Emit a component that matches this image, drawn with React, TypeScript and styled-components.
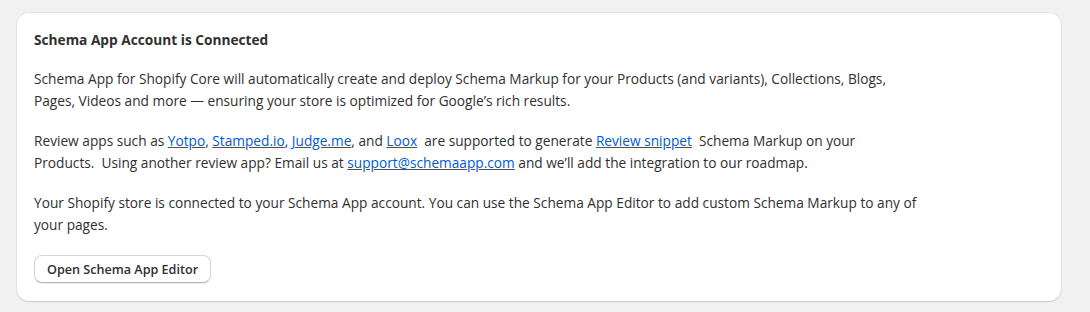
import React from 'react';
import styled, { createGlobalStyle } from 'styled-components';

const GlobalStyle = createGlobalStyle`
  body {
    margin: 0;
    background: #f1f1f1;
    font-family: 'Open Sans', 'Noto Sans', sans-serif;
    color: #303030;
  }
`;

const links = {
  yotpo: 'Yotpo',
  stamped: 'Stamped.io',
  judge: 'Judge.me',
  loox: 'Loox',
};

const App = () => {
  return (
    <>
      <GlobalStyle />
      <Page>
        <Card>
          <Title>Schema App Account is Connected</Title>
          <Paragraph>
            Schema App for Shopify Core will automatically create and deploy Schema Markup for your
            Products (and variants), Collections, Blogs, Pages, Videos and more — ensuring your store
            is optimized for Google’s rich results.
          </Paragraph>
          <Paragraph>
            Review apps such as <Link href="#">{links.yotpo}</Link>, <Link href="#">{links.stamped}</Link>,{' '}
            <Link href="#">{links.judge}</Link>, and <Link href="#">{links.loox}</Link>&nbsp; are supported
            to generate <Link href="#">Review snippet</Link>&nbsp; Schema Markup on your Products.&nbsp; Using
            another review app? Email us at <Link href="#">support@schemaapp.com</Link> and we’ll add the
            integration to our roadmap.
          </Paragraph>
          <Paragraph>
            Your Shopify store is connected to your Schema App account. You can use the Schema App Editor to
            add custom Schema Markup to any of your pages.
          </Paragraph>
          <Button>Open Schema App Editor</Button>
        </Card>
      </Page>
    </>
  );
};

export default App;

const Page = styled.main`
  padding: 13px 29px 11px 17px;
`;

const Card = styled.section`
  display: flex;
  flex-direction: column;
  align-items: flex-start;
  gap: 18px;
  padding: 17px 17px 18px 17px;
  background: #ffffff;
  border-radius: 12px;
  box-shadow: 0 1px 1px rgba(0, 0, 0, 0.12), 0 0 0 1px rgba(0, 0, 0, 0.05);
`;

const Title = styled.h2`
  margin: 0;
  font-size: 13.7px;
  line-height: 20px;
  font-weight: 700;
  color: #303030;
`;

const Paragraph = styled.p`
  margin: 0;
  max-width: 884px;
  font-size: 13.7px;
  line-height: 22px;
  color: #303030;
`;

const Link = styled.a`
  color: #005bd3;
  text-decoration: underline;
`;

const Button = styled.button`
  margin-top: 1px;
  height: 28px;
  padding: 0 12px;
  font-family: 'Open Sans', 'Noto Sans', sans-serif;
  font-size: 12.6px;
  font-weight: 600;
  color: #303030;
  background: #ffffff;
  border: 1px solid #d4d4d4;
  border-bottom-color: #b5b5b5;
  border-radius: 8px;
  box-shadow: 0 1px 0 rgba(0, 0, 0, 0.08);
  cursor: pointer;
`;
